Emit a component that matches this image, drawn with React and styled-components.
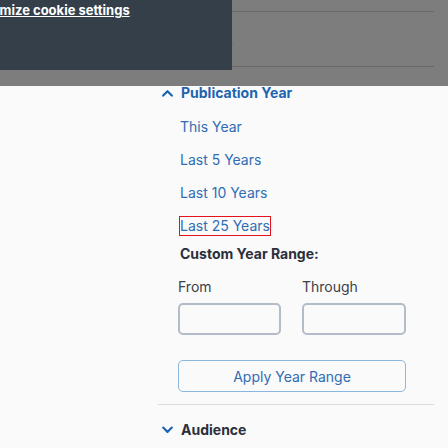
import React from "react";
import styled, { createGlobalStyle } from "styled-components";

const Global = createGlobalStyle`
  html, body { margin: 0; padding: 0; background: #fafafa; }
  body { font-family: Inter, "Noto Sans", Arial, sans-serif; font-size: 14px; color: #2b2f3a; }
  * { box-sizing: border-box; }
`;

const Page = styled.div`
  position: relative;
  width: 448px;
  height: 448px;
  overflow: hidden;
  padding-top: 11px;
`;

const Sidebar = styled.aside`
  margin-left: 158px;
  width: 276px;
  display: flex;
  flex-direction: column;
`;

const TopSection = styled.div`
  height: 56px;
  border-top: 1px solid #d2d2d2;
  border-bottom: 1px solid #d2d2d2;
  display: flex;
  align-items: center;
  padding-left: 22px;
  color: #2b2f3a;
`;

const Section = styled.section`
  display: flex;
  flex-direction: column;
  padding-top: ${(p) => p.$top || 0}px;
  border-top: ${(p) => (p.$divider ? "1px solid #dcdcdc" : "none")};
`;

const Toggle = styled.div`
  display: flex;
  align-items: center;
  gap: 8px;
  padding-left: 4px;
  height: 18px;
  line-height: 18px;
  font-weight: 700;
  font-size: 14px;
  color: ${(p) => p.$color};
`;

const Chevron = ({ up }) => (
  <svg width="11" height="8" viewBox="0 0 11 8" fill="none">
    <path
      d={up ? "M1.2 6.6 L5.5 2.2 L9.8 6.6" : "M1.2 1.6 L5.5 6 L9.8 1.6"}
      stroke="#1d64b0"
      strokeWidth="2.2"
      strokeLinecap="round"
      strokeLinejoin="round"
    />
  </svg>
);

const OptionList = styled.ul`
  list-style: none;
  margin: 16px 0 0;
  padding: 0 0 0 22px;
  display: flex;
  flex-direction: column;
  gap: 15px;
`;

const Option = styled.li`
  height: 18px;
  line-height: 18px;
`;

const OptionLink = styled.a`
  display: inline-block;
  line-height: 18px;
  color: #2f6db5;
  text-decoration: none;
  outline: ${(p) => (p.$focused ? "1px solid #e3121b" : "none")};
  outline-offset: 0;
`;

const SubHeading = styled.div`
  margin-top: 10px;
  padding-left: 22px;
  height: 18px;
  line-height: 18px;
  font-weight: 700;
  color: #2b2f3a;
`;

const FieldRow = styled.div`
  margin-top: 15px;
  padding-left: 20px;
  display: flex;
  gap: 21px;
`;

const Field = styled.label`
  display: flex;
  flex-direction: column;
  width: ${(p) => p.$w}px;
  color: #3a3f48;
  line-height: 18px;
  gap: 7px;
`;

const Input = styled.input`
  width: 100%;
  height: 32px;
  border: 2px solid #b3bcc8;
  border-radius: 5px;
  background: #fafafa;
  font: inherit;
  padding: 0 8px;
`;

const ApplyButton = styled.button`
  margin: 25px 0 0 20px;
  width: 228px;
  height: 32px;
  border: 1px solid #8ab7e2;
  border-radius: 5px;
  background: #fafafa;
  color: #2f6db5;
  font: inherit;
  font-size: 14px;
  cursor: pointer;
`;

const Spacer = styled.div`
  height: ${(p) => p.$h}px;
`;

const Overlay = styled.div`
  position: absolute;
  left: 0;
  top: 0;
  width: 100%;
  height: 86px;
  background: rgba(0, 0, 0, 0.5);
`;

const CookieBanner = styled.div`
  position: absolute;
  left: 0;
  top: 0;
  width: 232px;
  height: 70px;
  background: #343f4a;
  overflow: hidden;
  padding-top: 1px;
`;

const CookieLink = styled.a`
  display: block;
  margin-left: -38px;
  white-space: nowrap;
  color: #ffffff;
  font-weight: 700;
  font-size: 13px;
  line-height: 18px;
  text-decoration: underline;
`;

export default function App() {
  return (
    <>
      <Global />
      <Page>
        <Sidebar>
          <TopSection>Content</TopSection>
          <Section $top={17}>
            <Toggle $color="#1d64b0">
              <Chevron up />
              Publication Year
            </Toggle>
            <OptionList>
              <Option><OptionLink href="#">This Year</OptionLink></Option>
              <Option><OptionLink href="#">Last 5 Years</OptionLink></Option>
              <Option><OptionLink href="#">Last 10 Years</OptionLink></Option>
              <Option><OptionLink href="#" $focused>Last 25 Years</OptionLink></Option>
            </OptionList>
            <SubHeading>Custom Year Range:</SubHeading>
            <FieldRow>
              <Field $w={103}>
                From
                <Input type="text" />
              </Field>
              <Field $w={104}>
                Through
                <Input type="text" />
              </Field>
            </FieldRow>
            <ApplyButton>Apply Year Range</ApplyButton>
            <Spacer $h={12} />
          </Section>
          <Section $top={16} $divider>
            <Toggle $color="#2b2f3a">
              <Chevron />
              Audience
            </Toggle>
          </Section>
        </Sidebar>
        <Overlay />
        <CookieBanner>
          <CookieLink href="#">Customize cookie settings</CookieLink>
        </CookieBanner>
      </Page>
    </>
  );
}
